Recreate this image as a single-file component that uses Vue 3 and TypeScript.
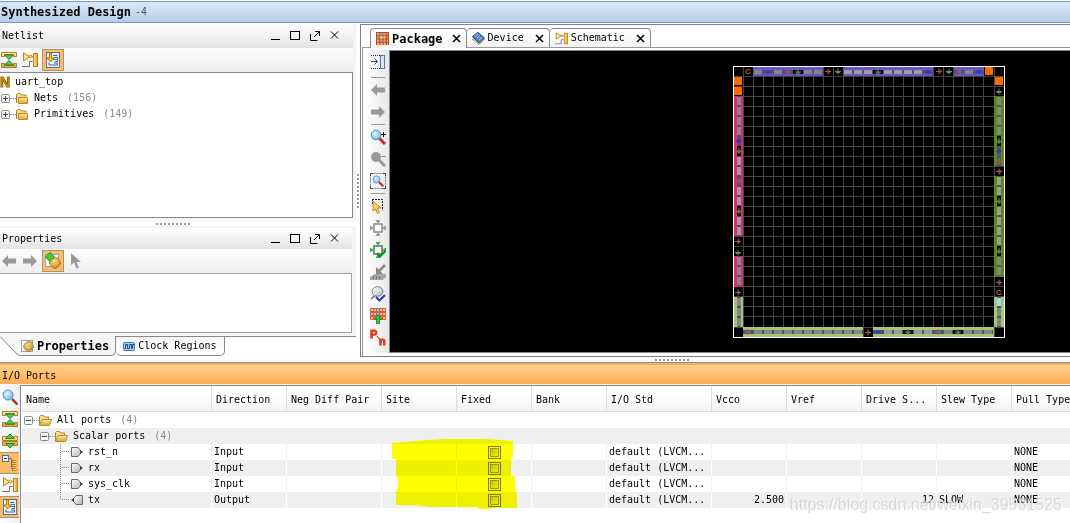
<script setup lang="ts">
import { ref } from 'vue'

interface Port {
  name: string
  direction: 'Input' | 'Output'
  std: string
  vcco: string
  drive: string
  slew: string
  pull: string
  fixed: boolean
}

interface Band {
  x: number
  y: number
  w: number
  h: number
  fill: string
  pins: string
}

const ports = ref<Port[]>([
  { name: 'rst_n', direction: 'Input', std: 'default (LVCM...', vcco: '', drive: '', slew: '', pull: 'NONE', fixed: false },
  { name: 'rx', direction: 'Input', std: 'default (LVCM...', vcco: '', drive: '', slew: '', pull: 'NONE', fixed: false },
  { name: 'sys_clk', direction: 'Input', std: 'default (LVCM...', vcco: '', drive: '', slew: '', pull: 'NONE', fixed: false },
  { name: 'tx', direction: 'Output', std: 'default (LVCM...', vcco: '2.500', drive: '12', slew: 'SLOW', pull: 'NONE', fixed: false },
])

const columns = ['Name', 'Direction', 'Neg Diff Pair', 'Site', 'Fixed', 'Bank', 'I/O Std', 'Vcco', 'Vref', 'Drive S...', 'Slew Type', 'Pull Type']

const nets = [
  { label: 'Nets', count: 156 },
  { label: 'Primitives', count: 149 },
]

const views = [
  { label: 'Package', icon: 'package' },
  { label: 'Device', icon: 'device' },
  { label: 'Schematic', icon: 'schematic' },
]

const canvasTools = [
  ['dock'],
  ['left', 'right'],
  ['zoom-in', 'zoom-out', 'zoom-fit'],
  ['select', 'place', 'place-check', 'ruler', 'drc', 'banks', 'diff'],
]

const ioTools = [
  { icon: 'search', on: false },
  { icon: 'collapse', on: false },
  { icon: 'expand', on: false },
  { icon: 'group', on: true },
  { icon: 'schematic', on: false },
  { icon: 'scroll', on: true },
]

// Pin codes: p/P pad, s selected pad, r power, g ground, b clock-capable
const bands: Band[] = [
  { x: 20, y: 1, w: 70, h: 9, fill: '#6455cd', pins: 'pbprgpp' },
  { x: 110, y: 1, w: 90, h: 9, fill: '#6455cd', pins: 'PPPgPPPPb' },
  { x: 221, y: 1, w: 30, h: 9, fill: '#6455cd', pins: 'rpb' },
  { x: 1, y: 30, w: 9, h: 140, fill: '#dc2b70', pins: 'ppppbgPPrPPgPP' },
  { x: 1, y: 190, w: 9, h: 31, fill: '#dc2b70', pins: 'ppp' },
  { x: 1, y: 231, w: 9, h: 30, fill: '#a0c872', pins: 'ppp' },
  { x: 261, y: 30, w: 10, h: 70, fill: '#548d12', pins: 'ppppgbr' },
  { x: 261, y: 110, w: 10, h: 101, fill: '#548d12', pins: 'PPgPPPPgpp' },
  { x: 261, y: 231, w: 10, h: 30, fill: '#a0c872', pins: 'spp' },
  { x: 10, y: 261, w: 120, h: 10, fill: '#a0c872', pins: 'rppppppppppp' },
  { x: 140, y: 261, w: 121, h: 10, fill: '#a0c872', pins: 'bPPgPPrpgppp' },
]

const padColor: Record<string, string> = { p: '#858585', P: '#a09a9d', s: '#9fd4ff', r: '#b0545c', g: '#6d8d61', b: '#2b2bf0' }

const pins = bands.flatMap((b) => {
  const wide = b.w > b.h
  return b.pins.split('').map((code, i) => ({
    x: wide ? b.x + i * 10 : b.x,
    y: wide ? b.y : b.y + i * 10,
    wide,
    code,
    pad: 'pPs'.includes(code),
    ground: code === 'g',
    color: padColor[code],
  }))
})

const marks = [
  { x: 95, y: 5, code: 'r' }, { x: 105, y: 5, code: 'g' }, { x: 206, y: 5, code: 'r' }, { x: 216, y: 5, code: 'g' },
  { x: 266, y: 25, code: 'g' }, { x: 266, y: 105, code: 'r' }, { x: 266, y: 216, code: 'r' },
  { x: 5, y: 175, code: 'r' }, { x: 5, y: 186, code: 'g' }, { x: 5, y: 226, code: 'r' }, { x: 135, y: 266, code: 'r' },
]

const arrowPath: Record<string, string> = {
  r: 'M-3 0h6M0-3v6M1-2v4',
  g: 'M0-3v6M-3 0h6M-2 1h4',
  b: 'M-3 0h6M0-2v4M-1-1v2',
}

const gridLines = Array.from({ length: 26 }, (_, i) => (i === 25 ? 261 : 10 + i * 10))
</script>

<template>
  <div class="app">
    <svg class="defs" aria-hidden="true">
      <defs>
        <linearGradient id="gold" x1="0" y1="0" x2="0" y2="1"><stop offset="0" stop-color="#ffe9a0" /><stop offset="1" stop-color="#e3a32a" /></linearGradient>
        <linearGradient id="goldx" x1="0" y1="0" x2="1" y2="0"><stop offset="0" stop-color="#fff0a8" /><stop offset="1" stop-color="#d79a1c" /></linearGradient>
        <linearGradient id="silver" x1="0" y1="0" x2="1" y2="1"><stop offset="0" stop-color="#fff" /><stop offset="1" stop-color="#b5b5b5" /></linearGradient>
        <radialGradient id="glass" cx=".4" cy=".35" r=".7"><stop offset="0" stop-color="#eaf8ff" /><stop offset="1" stop-color="#67b6ee" /></radialGradient>
        <radialGradient id="gearfill" cx=".4" cy=".35" r=".7"><stop offset="0" stop-color="#ffe680" /><stop offset="1" stop-color="#c98a10" /></radialGradient>
      </defs>
      <symbol id="collapse" viewBox="0 0 16 16">
        <path d="M.5.5h15v4h-3v-2h-9v2h-3zM.5 15.500h15v-4h-3v2h-9v-2h-3z" fill="url(#gold)" stroke="#b07a35" />
        <path d="M3.500 3h9L8 7.500zM3.500 13h9L8 8.500z" fill="#4ed24e" stroke="#138a1c" />
      </symbol>
      <symbol id="expand" viewBox="0 0 16 16">
        <path d="M.5 3.500h4v2h7v-2h4v4H.5zM.5 12.500h4v-2h7v2h4v-4H.5z" fill="url(#gold)" stroke="#b07a35" />
        <path d="M3.500 5.500h9L8 1zM3.500 10.500h9L8 15z" fill="#4ed24e" stroke="#138a1c" />
      </symbol>
      <symbol id="schematic" viewBox="0 0 16 16">
        <path d="M0 14.500h7.500v-5h3M8 4.500h3" fill="none" stroke="#777" />
        <path d="M1.500 .8v8l6-4z" fill="#ffe58a" stroke="#b98516" />
        <circle cx="8.500" cy="4.500" r="1.300" fill="#fff3b8" stroke="#b98516" />
        <rect x="11.500" y="1.500" width="4" height="13" fill="url(#goldx)" stroke="#b98516" />
      </symbol>
      <symbol id="scroll" viewBox="0 0 16 16">
        <rect x="1.500" y=".5" width="13" height="15" fill="#e4effa" stroke="#51749e" />
        <path d="M8 3.500h4.500M9 5.500h3.500v4H10M4 10.500V13h8.500v-2H9M8 7.500h4" fill="none" stroke="#4c6d94" />
        <path d="M4.500 1h2v5h2.500L5.500 10 2 6h2.500z" fill="#ffc12d" stroke="#b57a08" />
      </symbol>
      <symbol id="gear" viewBox="0 0 12 12">
        <path d="M5 0h2l.4 1.600 1.400-.9 1.500 1.500-.9 1.400L11.500 5v2l-1.900.4.9 1.400L9 10.300l-1.500-.9L7 11.500H5l-.4-2-1.500.9-1.500-1.500.9-1.400L.5 7V5l2-.4-.9-1.400L3.100 1.700l1.500.9z" fill="url(#gearfill)" stroke="#a87311" stroke-width=".7" />
        <circle cx="6" cy="6" r="1.500" fill="#b8c2c8" />
      </symbol>
      <symbol id="props" viewBox="0 0 18 18">
        <rect x="1.500" y="2.500" width="13" height="12" fill="#f8fbff" stroke="#8fa5c4" />
        <path d="M6 .5 10.500 5 6 9.500 1.500 5z" fill="#3fcf2e" stroke="#148f16" />
        <use href="#gear" x="5" y="5" width="12" height="12" />
      </symbol>
      <symbol id="propstab" viewBox="0 0 14 14">
        <rect x=".5" y="1.500" width="11" height="11" fill="#f8fbff" stroke="#8fa5c4" />
        <use href="#gear" x="2" y="2" width="11" height="11" />
      </symbol>
      <symbol id="left" viewBox="0 0 16 16"><path d="M1 8l6-6v3.500h8v5H7V14z" fill="#999" /></symbol>
      <symbol id="right" viewBox="0 0 16 16"><path d="M15 8L9 2v3.500H1v5h8V14z" fill="#999" /></symbol>
      <symbol id="cursor" viewBox="0 0 12 16"><path d="M1 0v12l3-2.500 2.500 6 2.500-1-2.500-5.500H11z" fill="#9b9b9b" /></symbol>
      <symbol id="wave" viewBox="0 0 12 9">
        <rect x=".5" y=".5" width="11" height="8" rx="1" fill="#a9cdf7" stroke="#3e74bd" />
        <path d="M1.500 6.500h1v-4h2v4h2v-4h2v4h1v-4h1.500" fill="none" stroke="#214a86" />
      </symbol>
      <symbol id="folder" viewBox="0 0 12 11">
        <path d="M.5 9.500v-8l1-1h3l1 1.500h4.500v2M.5 9.500h1" fill="#f7dc8d" stroke="#ad8433" />
        <path d="M2.500 4.500h9v6h-9z" fill="url(#gold)" stroke="#b98c36" />
      </symbol>
      <symbol id="openfolder" viewBox="0 0 13 11">
        <path d="M.5 10V1.500l1-1h3l1 1.500h4v3" fill="#f7dc8d" stroke="#ad8433" />
        <path d="M3 4.500h9.500l-2 6H.5z" fill="url(#gold)" stroke="#b98c36" />
      </symbol>
      <symbol id="plus" viewBox="0 0 9 9"><rect x=".5" y=".5" width="8" height="8" rx="1" fill="#f6f6f3" stroke="#8c8c8c" /><path d="M2 4.500h5M4.500 2v5" stroke="#27407c" /></symbol>
      <symbol id="minus" viewBox="0 0 9 9"><rect x=".5" y=".5" width="8" height="8" rx="1" fill="#f6f6f3" stroke="#8c8c8c" /><path d="M2 4.500h5" stroke="#27407c" /></symbol>
      <symbol id="twig" viewBox="0 0 10 16"><path d="M.5 0v16M2 7.500h8" fill="none" stroke="#888" stroke-dasharray="1 1" /></symbol>
      <symbol id="twigend" viewBox="0 0 10 16"><path d="M.5 0v8M2 7.500h8" fill="none" stroke="#888" stroke-dasharray="1 1" /></symbol>
      <symbol id="Input" viewBox="0 0 12 10"><path d="M.5.5h6.500l2.500 3v3l-2.500 3H.5z" fill="url(#silver)" stroke="#666" /><path d="M9 3l3 2-3 2z" fill="#333" /></symbol>
      <symbol id="Output" viewBox="0 0 12 10"><path d="M11.500.5H5l-2.500 3v3l2.500 3h6.500z" fill="url(#silver)" stroke="#666" /><path d="M3 3L0 5l3 2z" fill="#333" /></symbol>
      <symbol id="package" viewBox="0 0 12 12">
        <rect width="12" height="12" fill="#b8452c" />
        <path d="M1 2h10M1 5h10M1 8h10M1 11h10" stroke="#ffb24d" stroke-width="2" stroke-dasharray="2 1" />
        <path d="M4 2h4M1 5h2M4 8h4" stroke="#6fa8ef" stroke-width="2" stroke-dasharray="2 1" />
        <path d="M4 5h4" stroke="#ffe24c" stroke-width="2" stroke-dasharray="2 1" />
      </symbol>
      <symbol id="device" viewBox="0 0 13 13">
        <path d="M1 5v3l6 5 5-5V6z" fill="#e0c67e" stroke="#8b7a49" stroke-dasharray="1 1" />
        <path d="M6 .5l6.500 5.500L7 11 .5 4.500z" fill="#527fc5" stroke="#29467e" />
        <path d="M3 4.500l3-2.500M5 6l3-2.500M7 8l3-2.500" stroke="#b7d1f5" />
      </symbol>
      <symbol id="lens" viewBox="0 0 16 16"><path d="M9 9l6 6" stroke="#c4301f" stroke-width="3" /><circle cx="6" cy="6" r="4.800" fill="url(#glass)" stroke="#4b8fd0" /></symbol>
      <symbol id="search" viewBox="0 0 16 16"><path d="M10 10l5.500 5.500" stroke="#a33c34" stroke-width="2.500" /><circle cx="6" cy="6" r="5" fill="url(#glass)" stroke="#518cd0" /></symbol>
      <symbol id="dock" viewBox="0 0 16 16">
        <path d="M1 1.500h9M1 14.500h9" stroke="#333" stroke-dasharray="1 1" /><path d="M1 7.500h6M4.500 4.500l3 3-3 3" fill="none" stroke="#29466f" />
        <rect x="10.500" y="1.500" width="4" height="13" fill="#d4e8fb" stroke="#4f79aa" />
      </symbol>
      <symbol id="zoom-in" viewBox="0 0 16 16"><use href="#lens" width="16" height="16" /><path d="M11 5.500h5M13.500 3v5" stroke="#111" /></symbol>
      <symbol id="zoom-out" viewBox="0 0 16 16"><path d="M9 9l6 6" stroke="#999" stroke-width="3" /><circle cx="6" cy="6" r="5" fill="#999" /><path d="M11.500 5.500H16" stroke="#888" /></symbol>
      <symbol id="zoom-fit" viewBox="0 0 16 16"><rect x=".5" y=".5" width="15" height="15" fill="none" stroke="#777" stroke-dasharray="2 1" /><path d="M.5 3V.5H3M13 .5h2.500V3M.5 13v2.500H3M15.500 13v2.500H13" fill="none" stroke="#444" /><use href="#lens" x="2" y="2" width="12" height="12" /></symbol>
      <symbol id="select" viewBox="0 0 16 16"><path d="M2 1.500h10.500v11M2.500 1v6" fill="none" stroke="#222" stroke-dasharray="2 1" /><path d="M3 3v10l2.500-2 2 4.500 2-1-2-4.500h3.500z" fill="#ffd05b" stroke="#a8741a" stroke-width=".8" /></symbol>
      <symbol id="place" viewBox="0 0 16 16"><rect x="4" y="4" width="8" height="8" fill="#fff" stroke="#888" stroke-width="1.500" /><path d="M8 4L5.500 0h5zM8 12l-2.500 4h5zM4 8L0 5.500v5zM12 8l4-2.500v5z" fill="#999" /></symbol>
      <symbol id="place-check" viewBox="0 0 16 16"><rect x="4" y="4" width="8" height="8" fill="#fff" stroke="#5b6e5b" stroke-width="1.500" /><path d="M8 4L5.500 0h5zM8 12l-2.500 4h5zM4 8L0 5.500v5zM12 8l4-2.500v5z" fill="#16bd4d" /><path d="M7 11l3 3.500L15.500 9" fill="none" stroke="#158a1c" stroke-width="2" /></symbol>
      <symbol id="ruler" viewBox="0 0 16 16"><path d="M15 1l-6 6" stroke="#888" stroke-width="2.500" /><path d="M6 3v7h7z" fill="#888" /><path d="M0 13l5-3h11v3l-3 3H0z" fill="#a4a4a4" /><path d="M3.500 12v3M6.500 12v3M9.500 12v3" stroke="#777" /></symbol>
      <symbol id="drc" viewBox="0 0 16 16"><path d="M1 13l6-5" stroke="#888" stroke-width="2" /><ellipse cx="7.500" cy="5.500" rx="5.500" ry="4.800" fill="url(#silver)" stroke="#71808d" /><path d="M6 11l3.500 3.500L15 9" fill="none" stroke="#2c35c5" stroke-width="2" /></symbol>
      <symbol id="banks" viewBox="0 0 16 16"><rect width="16" height="12" rx="1" fill="#dd5a42" /><path d="M1 2h14M1 6h14M1 10h14" stroke="#ffc37c" stroke-width="2" stroke-dasharray="2 1" /><path d="M4 2h7M4 6h7" stroke="#9dc5f5" stroke-width="2" stroke-dasharray="2 1" /><path d="M8 6.500l4 4.500H9.500V16h-3v-5H4z" fill="#2fc528" stroke="#13751a" stroke-width=".7" /></symbol>
      <symbol id="group" viewBox="0 0 16 16"><path d="M7 3.500h2.500v10M9.500 7.500H11M9.500 10.500H11M9.500 13.500H11" fill="none" stroke="#777" /><rect x=".5" y=".5" width="6" height="6" fill="#e7f0fb" stroke="#55769f" /><path d="M2 3.500h3" stroke="#27407c" /><path d="M10.500 5.500h3l1 1-1 1h-3zM10.500 9.500h3l1 1-1 1h-3zM10.500 13.500h3l1 1-1 1h-3z" fill="#ffe58a" stroke="#a97b1d" /></symbol>
    </svg>

    <header class="titlebar"><strong>Synthesized Design</strong><span>-4</span></header>

    <div class="workspace">
      <aside class="side">
        <section class="panel netlist">
          <header class="panelhead">
            <h2>Netlist</h2>
            <div class="winbtns">
              <button aria-label="Minimize"><svg width="10" height="10"><path d="M1 8.500h9" /></svg></button>
              <button aria-label="Maximize"><svg width="10" height="10"><rect x=".5" y=".5" width="9" height="8" /></svg></button>
              <button aria-label="Float"><svg width="10" height="10"><path d="M.5 3v6.500h7M4 6l5-5M5 .5h4.500V5" /></svg></button>
              <button aria-label="Close"><svg width="10" height="10"><path d="M1 .5l7 7M8 .5l-7 7" /></svg></button>
            </div>
          </header>
          <div class="tools">
            <button aria-label="Collapse all"><svg width="16" height="16"><use href="#collapse" /></svg></button>
            <button aria-label="Schematic"><svg width="16" height="16"><use href="#schematic" /></svg></button>
            <button class="on" aria-label="Scroll to selection"><svg width="16" height="16"><use href="#scroll" /></svg></button>
          </div>
          <ul class="tree">
            <li class="top"><svg width="10" height="12"><text x="0" y="11" class="nmark">N</text></svg>uart_top</li>
            <li v-for="n in nets" :key="n.label">
              <svg width="9" height="9"><use href="#plus" /></svg><i class="dots"></i>
              <svg width="12" height="11"><use href="#folder" /></svg>
              <span class="lbl">{{ n.label }}</span><span class="count">({{ n.count }})</span>
            </li>
          </ul>
        </section>
        <div class="hsplit"><i class="grip"></i></div>
        <section class="panel properties">
          <header class="panelhead">
            <h2>Properties</h2>
            <div class="winbtns">
              <button aria-label="Minimize"><svg width="10" height="10"><path d="M1 8.500h9" /></svg></button>
              <button aria-label="Maximize"><svg width="10" height="10"><rect x=".5" y=".5" width="9" height="8" /></svg></button>
              <button aria-label="Float"><svg width="10" height="10"><path d="M.5 3v6.500h7M4 6l5-5M5 .5h4.500V5" /></svg></button>
              <button aria-label="Close"><svg width="10" height="10"><path d="M1 .5l7 7M8 .5l-7 7" /></svg></button>
            </div>
          </header>
          <div class="tools">
            <button aria-label="Back"><svg width="16" height="16"><use href="#left" /></svg></button>
            <button aria-label="Forward"><svg width="16" height="16"><use href="#right" /></svg></button>
            <button class="on" aria-label="Auto update"><svg width="18" height="18"><use href="#props" /></svg></button>
            <button aria-label="Select"><svg width="12" height="16"><use href="#cursor" /></svg></button>
          </div>
          <div class="empty"></div>
        </section>
        <nav class="sidetabs">
          <svg width="20" height="20"><path d="M0 0v.5L15 16q3 3.500 5 3.500V0z" fill="#f5f5f5" /><path d="M0 .5L15 16q3 3.500 5 3.500" fill="none" stroke="#888" /></svg>
          <button class="active"><svg width="14" height="14"><use href="#propstab" /></svg>Properties</button>
          <button><svg width="12" height="9"><use href="#wave" /></svg>Clock Regions</button>
          <i></i>
        </nav>
      </aside>

      <div class="vsplit"><i class="grip vert"></i></div>

      <main class="view">
        <nav class="viewtabs">
          <div v-for="(v, i) in views" :key="v.label" class="viewtab" :class="{ active: i === 0 }">
            <button class="pick"><svg width="13" height="13"><use :href="'#' + v.icon" /></svg>{{ v.label }}</button>
            <button class="shut" :aria-label="'Close ' + v.label"><svg width="9" height="9"><path d="M1 1l7 7M8 1L1 8" stroke="#000" stroke-width="1.500" /></svg></button>
          </div>
        </nav>
        <div class="viewbody">
          <div class="vtools">
            <div v-for="(g, i) in canvasTools" :key="i" class="toolgroup">
              <button v-for="t in g" :key="t" :aria-label="t">
                <svg v-if="t === 'diff'" width="16" height="18"><path d="M7 7l3 4" stroke="#8d2a1a" /><text x="0" y="9" class="pn">P</text><text x="9" y="16" class="pn">n</text></svg>
                <svg v-else width="16" height="16"><use :href="'#' + t" /></svg>
              </button>
            </div>
          </div>
          <div class="canvas">
            <svg class="chip" width="272" height="272" viewBox="0 0 272 272" role="img" aria-label="Package pins">
              <rect x=".5" y=".5" width="271" height="271" fill="#000" stroke="#fff" />
              <g stroke="#454545">
                <path v-for="p in gridLines" :key="'v' + p" :d="`M${p + 0.5} 1v270M1 ${p + 0.5}h270`" />
              </g>
              <rect v-for="(b, i) in bands" :key="'b' + i" :x="b.x" :y="b.y" :width="b.w" :height="b.h" :fill="b.fill" />
              <g v-for="(p, i) in pins" :key="'p' + i" :transform="`translate(${p.x} ${p.y})`">
                <rect :x="p.wide ? 0 : 3" :y="p.wide ? 3 : 0" :width="p.wide ? 10 : 4" :height="p.wide ? 4 : 10" :fill="p.ground ? '#0b100b' : '#53506e'" />
                <rect v-if="p.pad" :x="p.wide ? 1 : 3" :y="p.wide ? 3 : 1" :width="p.wide ? 8 : 4" :height="p.wide ? 4 : 8" :fill="p.color" />
                <path v-else transform="translate(5 5)" :d="arrowPath[p.code]" :stroke="p.color" fill="none" />
              </g>
              <path v-for="(m, i) in marks" :key="'m' + i" :transform="`translate(${m.x} ${m.y + 0.5})`" :d="arrowPath[m.code]" :stroke="padColor[m.code]" fill="none" />
              <path d="M252 1h8v8h-8zM262 11h8v8h-8zM1 11h8v8h-8zM1 21h8v8h-8z" fill="#ff6a00" />
              <text x="12" y="8" class="cfg">C</text>
              <text x="263" y="229" class="cfg">C</text>
            </svg>
          </div>
        </div>
      </main>
    </div>

    <div class="iosplit"><i class="grip"></i></div>

    <section class="io">
      <h2 class="iohead">I/O Ports</h2>
      <div class="iobody">
        <div class="iotools">
          <button v-for="t in ioTools" :key="t.icon" :class="{ on: t.on }" :aria-label="t.icon"><svg width="16" height="16"><use :href="'#' + t.icon" /></svg></button>
        </div>
        <div class="tablewrap">
          <table>
            <colgroup><col v-for="(c, i) in columns" :key="c" :class="'c' + i" /></colgroup>
            <thead>
              <tr><th v-for="c in columns" :key="c" scope="col">{{ c }}</th></tr>
            </thead>
            <tbody>
              <tr class="grouprow">
                <td :colspan="columns.length"><div class="cell l0"><svg width="9" height="9"><use href="#minus" /></svg><i class="dots"></i><svg width="13" height="11"><use href="#openfolder" /></svg><span class="lbl">All ports</span><span class="count">(4)</span></div></td>
              </tr>
              <tr class="grouprow">
                <td :colspan="columns.length"><div class="cell l1"><svg width="9" height="9"><use href="#minus" /></svg><i class="dots"></i><svg width="13" height="11"><use href="#openfolder" /></svg><span class="lbl">Scalar ports</span><span class="count">(4)</span></div></td>
              </tr>
              <tr v-for="(p, i) in ports" :key="p.name">
                <td><div class="cell l2"><svg width="10" height="16"><use :href="i === ports.length - 1 ? '#twigend' : '#twig'" /></svg><svg width="12" height="10"><use :href="'#' + p.direction" /></svg><span class="lbl">{{ p.name }}</span></div></td>
                <td>{{ p.direction }}</td>
                <td></td>
                <td></td>
                <td class="mid"><input v-model="p.fixed" type="checkbox" :aria-label="'Fixed ' + p.name" /></td>
                <td></td>
                <td>{{ p.std }}</td>
                <td class="num">{{ p.vcco }}</td>
                <td></td>
                <td class="num">{{ p.drive }}</td>
                <td>{{ p.slew }}</td>
                <td>{{ p.pull }}</td>
              </tr>
            </tbody>
          </table>
          <svg class="marker" width="126" height="72" aria-hidden="true"><path d="M1 5l24-2 28-2h42l27 2v16h-2v19h4v16h2v16h-25v1h-14v-2H42l-20-2H5V51h2V39H5V21H1z" fill="#ff0" /></svg>
        </div>
      </div>
      <div class="watermark">https://blog.csdn.net/weixin_39531525</div>
    </section>
  </div>
</template>

<style>
body {
  background: #fff;
}
</style>

<style scoped>
.app {
  font: 10px/16px 'DejaVu Sans Mono', 'Liberation Mono', monospace;
  color: #000;
  min-height: 100vh;
  display: flex;
  flex-direction: column;
  overflow: hidden;
}
.defs {
  position: absolute;
  width: 0;
  height: 0;
}
svg {
  flex: none;
  display: block;
}
button {
  font: inherit;
  color: inherit;
  border: 0;
  padding: 0;
  margin: 0;
  background: none;
  display: flex;
  align-items: center;
  justify-content: center;
}
h2 {
  font: inherit;
  margin: 0;
}
.pn {
  font: bold 11px 'Liberation Sans', sans-serif;
  fill: #e2401c;
  stroke: #e2401c;
}
.nmark {
  font: bold 14px 'Liberation Sans', sans-serif;
  fill: #e0a614;
  stroke: #8f6708;
  stroke-width: 1px;
}
.cfg {
  font: bold 8px 'Liberation Sans', sans-serif;
  fill: #d8600c;
}
.titlebar {
  margin-top: 1px;
  height: 20px;
  border: solid #6e9fd0;
  border-width: 1px 0;
  background: linear-gradient(#dbe8f6, #b3cfe8);
  display: flex;
  align-items: center;
  gap: 4px;
  padding-left: 1px;
}
.titlebar strong {
  font-size: 12px;
}
.titlebar span {
  color: #555;
}
.workspace {
  display: flex;
  padding-top: 1px;
}
.side {
  width: 356px;
  flex: none;
  display: flex;
  flex-direction: column;
}
.panel {
  background: #f5f5f5;
  padding-right: 3px;
}
.netlist {
  padding-bottom: 3px;
}
.properties {
  padding: 2px 4px 3px 0;
}
.panelhead {
  height: 24px;
  background: linear-gradient(#fff, #e4e4e4);
  display: flex;
  align-items: center;
  justify-content: space-between;
  padding: 0 13px 0 2px;
}
.properties .panelhead {
  height: 21px;
  padding-right: 12px;
}
.winbtns {
  display: flex;
  gap: 10px;
}
.winbtns svg {
  fill: none;
  stroke: #000;
}
.tools {
  height: 24px;
  background: linear-gradient(#fdfdfd, #eee);
  display: flex;
  align-items: center;
}
.tools button {
  width: 20px;
  height: 20px;
  margin-right: 2px;
  box-sizing: content-box;
}
.tools button:first-child {
  width: 18px;
}
.tools .on {
  border: 1px solid #a4937d;
  background: #ffba66;
}
.tree {
  list-style: none;
  margin: 0;
  padding: 1px 0 0;
  height: 143px;
  background: #fff;
  border: solid #838791;
  border-width: 1px 1px 1px 0;
}
.tree li {
  display: flex;
  align-items: center;
  padding-left: 1px;
}
.tree .top {
  padding-left: 0;
  gap: 5px;
}
.dots {
  width: 6px;
  border-top: 1px dotted #888;
}
.lbl {
  margin-left: 6px;
}
.count {
  margin-left: 9px;
  color: #888;
}
.hsplit {
  height: 5px;
  display: flex;
  align-items: center;
  padding-left: 156px;
}
.grip {
  width: 34px;
  height: 2px;
  background: repeating-linear-gradient(90deg, #999 0 2px, #fff 2px 4px);
}
.grip.vert {
  width: 2px;
  height: 34px;
  background: repeating-linear-gradient(#999 0 2px, #fff 2px 4px);
}
.empty {
  height: 58px;
  background: #fff;
  border: solid #a0a0a0;
  border-width: 1px 1px 1px 0;
}
.sidetabs {
  display: flex;
  height: 20px;
}
.sidetabs button {
  gap: 3px;
  padding: 0 7px;
  border: solid #888;
  border-width: 1px 1px 1px 0;
  border-radius: 0 0 5px 5px;
  background: linear-gradient(#f5f5f5, #fff);
}
.sidetabs .active {
  font-size: 12px;
  font-weight: bold;
  gap: 2px;
  padding: 0 6px 0 1px;
  border-top: 0;
  border-radius: 0 0 5px 0;
  background: #f5f5f5;
}
.sidetabs > i {
  flex: 1;
  border-top: 1px solid #888;
}
.vsplit {
  width: 4px;
  flex: none;
  display: flex;
  align-items: center;
  justify-content: center;
}
.view {
  flex: 1;
  min-width: 0;
  border: solid #808080;
  border-width: 1px 0 1px 1px;
  padding-left: 1px;
  display: flex;
  flex-direction: column;
}
.viewtabs {
  display: flex;
  padding: 3px 0 0 8px;
  height: 19px;
  border-bottom: 1px solid #999;
}
.viewtab {
  display: flex;
  align-items: center;
  height: 18px;
  gap: 11px;
  padding: 0 5px;
  border: solid #888;
  border-width: 1px 1px 0 0;
  border-radius: 4px 4px 0 0;
  background: linear-gradient(#fff, #f3f3f3);
}
.viewtab.active {
  border-left-width: 1px;
  height: 19px;
  gap: 9px;
}
.viewtab .pick {
  gap: 3px;
}
.active .pick {
  font-size: 12px;
  font-weight: bold;
}
.viewbody {
  flex: 1;
  display: flex;
  border-left: 1px solid #999;
  padding: 2px 0 3px 2px;
}
.vtools {
  width: 22px;
  background: linear-gradient(90deg, #fff, #e8e8e8);
  padding: 1px 0 0 2px;
}
.toolgroup button {
  width: 22px;
  height: 22px;
}
.toolgroup + .toolgroup::before {
  content: '';
  display: block;
  height: 1px;
  margin: 1px 4px;
  background: #999;
}
.toolgroup:first-child {
  padding-bottom: 3px;
}
.canvas {
  flex: 1;
  min-width: 0;
  background: #000;
  border: solid #858a94;
  border-width: 1px 0 1px 1px;
  display: flex;
  justify-content: flex-end;
  padding: 15px 65px 14px 0;
}
.iosplit {
  height: 5px;
  display: flex;
  align-items: center;
  justify-content: center;
  padding-left: 274px;
}
.io {
  flex: 1;
  display: flex;
  flex-direction: column;
  position: relative;
  border-top: 1px solid #909090;
}
.iohead {
  height: 19px;
  line-height: 21px;
  padding: 0 2px;
  border-top: 2px solid #ffa850;
  background: linear-gradient(#ffd28c, #ffac54);
}
.iobody {
  flex: 1;
  display: flex;
  background: #f5f5f5;
  padding-top: 1px;
}
.iotools {
  width: 20px;
  flex: none;
  padding-top: 1px;
  background: linear-gradient(90deg, #fff, #ececec);
}
.iotools button {
  width: 19px;
  height: 22px;
}
.iotools .on {
  background: #ffba66;
  border: solid #a4937d;
  border-width: 1px 0;
}
.tablewrap {
  flex: 1;
  min-width: 0;
  position: relative;
  background: #fff;
  border: solid #838791;
  border-width: 1px 0 0 1px;
  padding-left: 1px;
}
table {
  width: 100%;
  table-layout: fixed;
  border-collapse: separate;
  border-spacing: 0;
}
.c0 {
  width: 190px;
}
.c1,
.c3,
.c4,
.c5,
.c7,
.c8,
.c9,
.c10 {
  width: 75px;
}
.c2 {
  width: 95px;
}
.c6 {
  width: 105px;
}
th {
  height: 26px;
  padding: 3px 0 0 4px;
  box-sizing: border-box;
  text-align: left;
  font-weight: normal;
  white-space: nowrap;
  background: linear-gradient(#fff 35%, #f1f2f4);
  border: solid #dcdcdc;
  border-width: 0 1px 1px 0;
}
td {
  height: 16px;
  padding: 0 2px;
  white-space: nowrap;
  border-right: 1px solid #efefef;
}
tbody tr:nth-child(even) td {
  background: #efefef;
  border-color: #fff;
}
tbody .grouprow td {
  border-right: 0;
}
th:last-child,
td:last-child {
  border-right: 0;
}
.cell {
  display: flex;
  align-items: center;
  height: 16px;
}
.l1 {
  padding-left: 16px;
}
.l2 {
  padding-left: 36px;
}
.l2 svg + svg {
  margin-left: 1px;
}
.cell .lbl {
  margin-left: 5px;
}
.num {
  text-align: right;
}
.mid {
  text-align: center;
}
.mid input {
  appearance: none;
  display: block;
  width: 13px;
  height: 13px;
  margin: 1px auto 0;
  border: 1px solid #777;
  background: linear-gradient(135deg, #c4c4c4, #f4f4f4) content-box;
  padding: 2px;
  outline: 1px solid #999;
  outline-offset: -3px;
}
.marker {
  position: absolute;
  left: 370px;
  top: 52px;
  mix-blend-mode: multiply;
  pointer-events: none;
}
.watermark {
  position: absolute;
  right: 8px;
  bottom: 8px;
  font: 16px/20px 'Liberation Sans', Arial, sans-serif;
  color: rgba(205, 205, 205, 0.75);
  text-shadow: 1px 1px 1px #fff;
  pointer-events: none;
}
</style>
